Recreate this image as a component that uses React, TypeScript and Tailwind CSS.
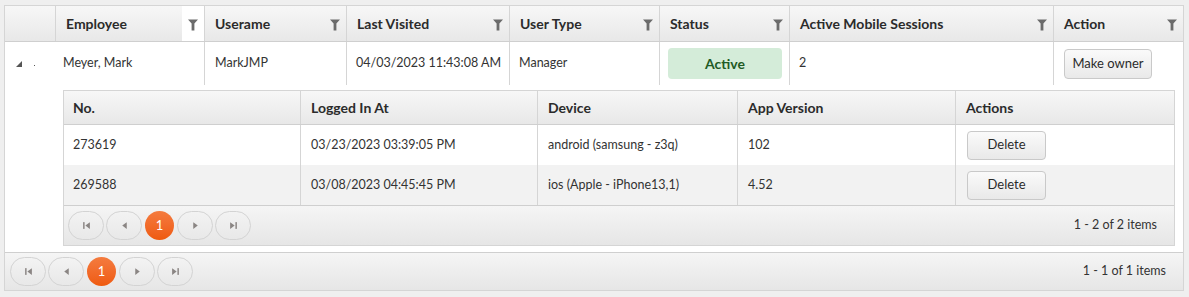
import React from "react";

const font = { fontFamily: "Lato, 'Open Sans', sans-serif" };

function Filter() {
  return (
    <svg width="10" height="12" viewBox="0 0 10 12" className="block">
      <path d="M0 0.5 H10 L6.4 4.5 V11.5 H3.6 V4.5 Z" fill="#6b6b6b" />
    </svg>
  );
}

function HeadCell({ label, active, border = true }: { label: string; active?: boolean; border?: boolean }) {
  return (
    <div className={`flex items-stretch ${border ? "border-l border-[#d5d5d5]" : ""}`}>
      <div className="flex-1 flex items-center pl-[10px] font-bold text-[14px] text-[#2b2b2b] whitespace-nowrap">{label}</div>
      <div className={`w-[22px] flex items-center justify-center pt-[3px] ${active ? "bg-white" : ""}`}>
        <Filter />
      </div>
    </div>
  );
}

function PagerIcon({ kind }: { kind: "first" | "prev" | "next" | "last" }) {
  const c = "#8a8583";
  return (
    <svg width="9" height="9" viewBox="0 0 8 8">
      {kind === "first" && (
        <>
          <rect x="1" y="1" width="1.3" height="6" fill={c} />
          <path d="M7 1 L3 4 L7 7 Z" fill={c} />
        </>
      )}
      {kind === "prev" && <path d="M6 1 L2 4 L6 7 Z" fill={c} />}
      {kind === "next" && <path d="M2 1 L6 4 L2 7 Z" fill={c} />}
      {kind === "last" && (
        <>
          <path d="M1 1 L5 4 L1 7 Z" fill={c} />
          <rect x="5.7" y="1" width="1.3" height="6" fill={c} />
        </>
      )}
    </svg>
  );
}

function PagerBtn({ kind }: { kind: "first" | "prev" | "next" | "last" }) {
  return (
    <div className="w-[36px] h-[29px] rounded-full border border-[#d3d3d3] flex items-center justify-center">
      <PagerIcon kind={kind} />
    </div>
  );
}

function Pager({ text, className }: { text: string; className: string }) {
  return (
    <div className={`flex items-center justify-between bg-gradient-to-b from-[#f5f5f5] to-[#e6e6e6] ${className}`}>
      <div className="flex items-center gap-[2px]">
        <PagerBtn kind="first" />
        <PagerBtn kind="prev" />
        <div className="w-[29px] h-[29px] mx-[1px] rounded-full bg-gradient-to-b from-[#f47b3e] to-[#ef5a0c] text-white text-[13px] flex items-center justify-center">
          1
        </div>
        <PagerBtn kind="next" />
        <PagerBtn kind="last" />
      </div>
      <div className="text-[12.5px] text-[#333]">{text}</div>
    </div>
  );
}

function Btn({ label, className }: { label: string; className: string }) {
  return (
    <div
      className={`flex items-center justify-center rounded-[4px] border border-[#c9c9c9] bg-gradient-to-b from-[#fafafa] to-[#e9e9e9] text-[13px] text-[#2b2b2b] ${className}`}
    >
      {label}
    </div>
  );
}

const subCols = "grid grid-cols-[236px_237px_200px_218px_1fr]";

export default function App() {
  return (
    <div className="w-[1189px] h-[297px] bg-[#efefef] pt-[5px] pl-[4px] pr-[5px]" style={font}>
      <div className="border border-[#d5d5d5] bg-white">
        {/* header */}
        <div className="grid grid-cols-[50px_149px_142px_163px_150px_130px_264px_1fr] h-[36px] border-b border-[#cfcfcf] bg-gradient-to-b from-[#f7f7f7] to-[#e8e8e8]">
          <div />
          <HeadCell label="Employee" active />
          <HeadCell label="Userame" />
          <HeadCell label="Last Visited" />
          <HeadCell label="User Type" />
          <HeadCell label="Status" />
          <HeadCell label="Active Mobile Sessions" />
          <HeadCell label="Action" />
        </div>
        {/* data row */}
        <div className="grid grid-cols-[50px_149px_142px_163px_150px_130px_264px_1fr] h-[43px] text-[12.5px] text-[#333]">
          <div className="flex items-center pl-[11px] gap-[12px]">
            <svg width="6" height="6" viewBox="0 0 6 6">
              <path d="M6 0 V6 H0 Z" fill="#555" />
            </svg>
            <div className="w-[1px] h-[1px] bg-[#555] mt-[4px]" />
          </div>
          <div className="flex items-center pl-[8px]">Meyer, Mark</div>
          <div className="flex items-center pl-[10px] border-l border-[#d5d5d5]">MarkJMP</div>
          <div className="flex items-center pl-[9px] border-l border-[#d5d5d5] whitespace-nowrap">04/03/2023 11:43:08 AM</div>
          <div className="flex items-center pl-[9px] border-l border-[#d5d5d5]">Manager</div>
          <div className="flex items-center pl-[8px] pr-[7px] border-l border-[#d5d5d5]">
            <div className="w-full h-[31px] rounded-[4px] bg-[#d4ecd9] flex items-center justify-center font-bold text-[14px] text-[#1f5a25]">
              Active
            </div>
          </div>
          <div className="flex items-center pl-[9px] border-l border-[#d5d5d5]">2</div>
          <div className="flex items-center pl-[10px] border-l border-[#d5d5d5]">
            <Btn label="Make owner" className="w-[88px] h-[30px]" />
          </div>
        </div>
        {/* detail row */}
        <div className="pl-[58px] pr-[8px] pt-[5px] pb-[6px]">
          <div className="border border-[#d5d5d5]">
            <div className={`${subCols} h-[34px] border-b border-[#cfcfcf] bg-gradient-to-b from-[#f7f7f7] to-[#e8e8e8] font-bold text-[14px] text-[#2b2b2b]`}>
              <div className="flex items-center pl-[9px]">No.</div>
              <div className="flex items-center pl-[10px] border-l border-[#d5d5d5]">Logged In At</div>
              <div className="flex items-center pl-[10px] border-l border-[#d5d5d5]">Device</div>
              <div className="flex items-center pl-[10px] border-l border-[#d5d5d5]">App Version</div>
              <div className="flex items-center pl-[10px] border-l border-[#d5d5d5]">Actions</div>
            </div>
            {[
              ["273619", "03/23/2023 03:39:05 PM", "android (samsung - z3q)", "102", "bg-white"],
              ["269588", "03/08/2023 04:45:45 PM", "ios (Apple - iPhone13,1)", "4.52", "bg-[#f2f2f2]"],
            ].map((r) => (
              <div key={r[0]} className={`${subCols} h-[40px] text-[12.5px] text-[#333] ${r[4]}`}>
                <div className="flex items-center pl-[9px]">{r[0]}</div>
                <div className="flex items-center pl-[10px] border-l border-[#d5d5d5]">{r[1]}</div>
                <div className="flex items-center pl-[10px] border-l border-[#d5d5d5]">{r[2]}</div>
                <div className="flex items-center pl-[10px] border-l border-[#d5d5d5]">{r[3]}</div>
                <div className="flex items-center pl-[11px] border-l border-[#d5d5d5]">
                  <Btn label="Delete" className="w-[79px] h-[29px]" />
                </div>
              </div>
            ))}
            <Pager text="1 - 2 of 2 items" className="h-[40px] border-t border-[#cfcfcf] pl-[4px] pr-[17px]" />
          </div>
        </div>
        {/* outer pager */}
        <Pager text="1 - 1 of 1 items" className="h-[38px] border-t border-[#cfcfcf] pl-[5px] pr-[17px]" />
      </div>
    </div>
  );
}
